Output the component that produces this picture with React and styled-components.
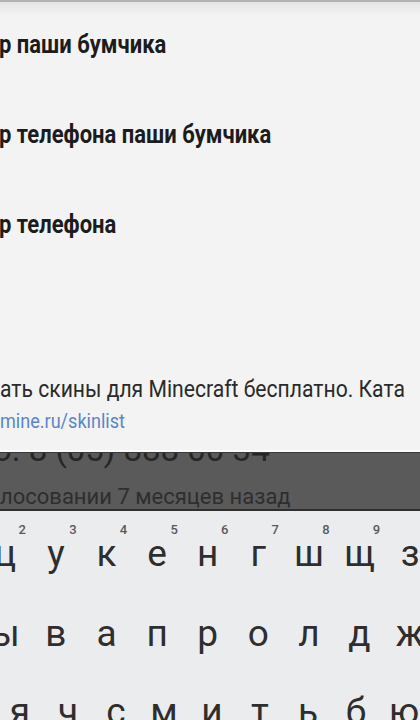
import React from "react";
import styled, { createGlobalStyle } from "styled-components";

const GlobalStyle = createGlobalStyle`
  html, body {
    margin: 0;
    padding: 0;
  }
  body {
    width: 420px;
    height: 720px;
    overflow: hidden;
    background: #ebecee;
    font-family: Roboto, "Liberation Sans", sans-serif;
  }
`;

const Screen = styled.div`
  width: 420px;
  height: 720px;
  overflow: hidden;
  display: flex;
  flex-direction: column;
`;

const Stage = styled.div`
  position: relative;
  height: 511px;
  flex: none;
  background: #5a5a5a;
  border-bottom: 2px solid #2f2f2f;
  box-sizing: border-box;
  overflow: hidden;
`;

const Dimmed = styled.div`
  padding-top: 433px;
  color: #262626;
`;

const Phone = styled.div`
  font-size: 33px;
  line-height: 33px;
  white-space: nowrap;
  margin-left: -7px;
`;

const Meta = styled.div`
  margin-top: 20px;
  font-size: 22px;
  line-height: 22px;
  white-space: nowrap;
  color: #2e2e2e;
`;

const Dropdown = styled.div`
  position: absolute;
  top: 0;
  left: 0;
  right: 0;
  height: 452px;
  box-sizing: border-box;
  background: linear-gradient(#e4e4e4, #f3f3f3 14px, #f3f3f3);
  border-top: 2px solid #b3b3b3;
  border-bottom: 2px solid #fbfbfb;
  box-shadow: 0 1px 0 #3a3a3a;
`;

/* condensed look: the device font is narrower than Roboto */
const Narrow = styled.span`
  display: inline-block;
  white-space: nowrap;
  transform: scaleX(${(p) => p.$scale});
  transform-origin: left center;
`;

const Suggestion = styled.div`
  height: 90px;
  box-sizing: border-box;
  padding-bottom: 6px;
  display: flex;
  align-items: center;
  font-size: 25px;
  font-weight: 700;
  color: #1c1c1c;
  margin-left: -1px;
`;

const Description = styled.div`
  margin-top: 104px;
  font-size: 24px;
  line-height: 27px;
  color: #2a2a2a;
`;

const Link = styled.div`
  margin-top: 5px;
  font-size: 21px;
  line-height: 26px;
  color: #5a86c6;
`;

const Keyboard = styled.div`
  flex: 1;
  background: #ebecee;
  overflow: hidden;
  padding-top: 2px;
`;

const KeyRow = styled.div`
  display: flex;
  height: ${(p) => p.$height}px;
  margin-left: ${(p) => p.$offset}px;
`;

const Key = styled.div`
  position: relative;
  flex: none;
  width: ${(p) => p.$width}px;
  display: flex;
  align-items: center;
  justify-content: center;
  font-size: 37px;
  font-weight: 400;
  line-height: 1;
  color: #2e2e2e;
  padding-bottom: 2px;
  box-sizing: border-box;
`;

const Hint = styled.span`
  position: absolute;
  top: 10px;
  left: 50%;
  margin-left: 11px;
  width: 12px;
  text-align: center;
  font-size: 13px;
  font-weight: 500;
  line-height: 13px;
  color: #5a5a5a;
`;

const rows = [
  { offset: -20, width: 50.6, height: 83, keys: ["ц", "у", "к", "е", "н", "г", "ш", "щ", "з", "х"], hints: ["2", "3", "4", "5", "6", "7", "8", "9"] },
  { offset: -20, width: 50.6, height: 76, keys: ["ы", "в", "а", "п", "р", "о", "л", "д", "ж", "э"], hints: [] },
  { offset: -4, width: 48, height: 80, keys: ["я", "ч", "с", "м", "и", "т", "ь", "б", "ю"], hints: [] },
];

const suggestions = ["р паши бумчика", "р телефона паши бумчика", "р телефона"];

export default function App() {
  return (
    <Screen>
      <GlobalStyle />
      <Stage>
        <Dimmed>
          <Phone>о. 8 (05) 888 00 34</Phone>
          <Meta>лосовании 7 месяцев назад</Meta>
        </Dimmed>
        <Dropdown>
          {suggestions.map((s) => (
            <Suggestion key={s}>
              <Narrow $scale={0.88}>{s}</Narrow>
            </Suggestion>
          ))}
          <Description>
            <Narrow $scale={0.88}>ать скины для Minecraft бесплатно. Ката</Narrow>
          </Description>
          <Link>
            <Narrow $scale={0.86}>mine.ru/skinlist</Narrow>
          </Link>
        </Dropdown>
      </Stage>
      <Keyboard>
        {rows.map((row, i) => (
          <KeyRow key={i} $offset={row.offset} $height={row.height}>
            {row.keys.map((k, j) => (
              <Key key={k} $width={row.width}>
                {row.hints[j] ? <Hint>{row.hints[j]}</Hint> : null}
                {k}
              </Key>
            ))}
          </KeyRow>
        ))}
      </Keyboard>
    </Screen>
  );
}
